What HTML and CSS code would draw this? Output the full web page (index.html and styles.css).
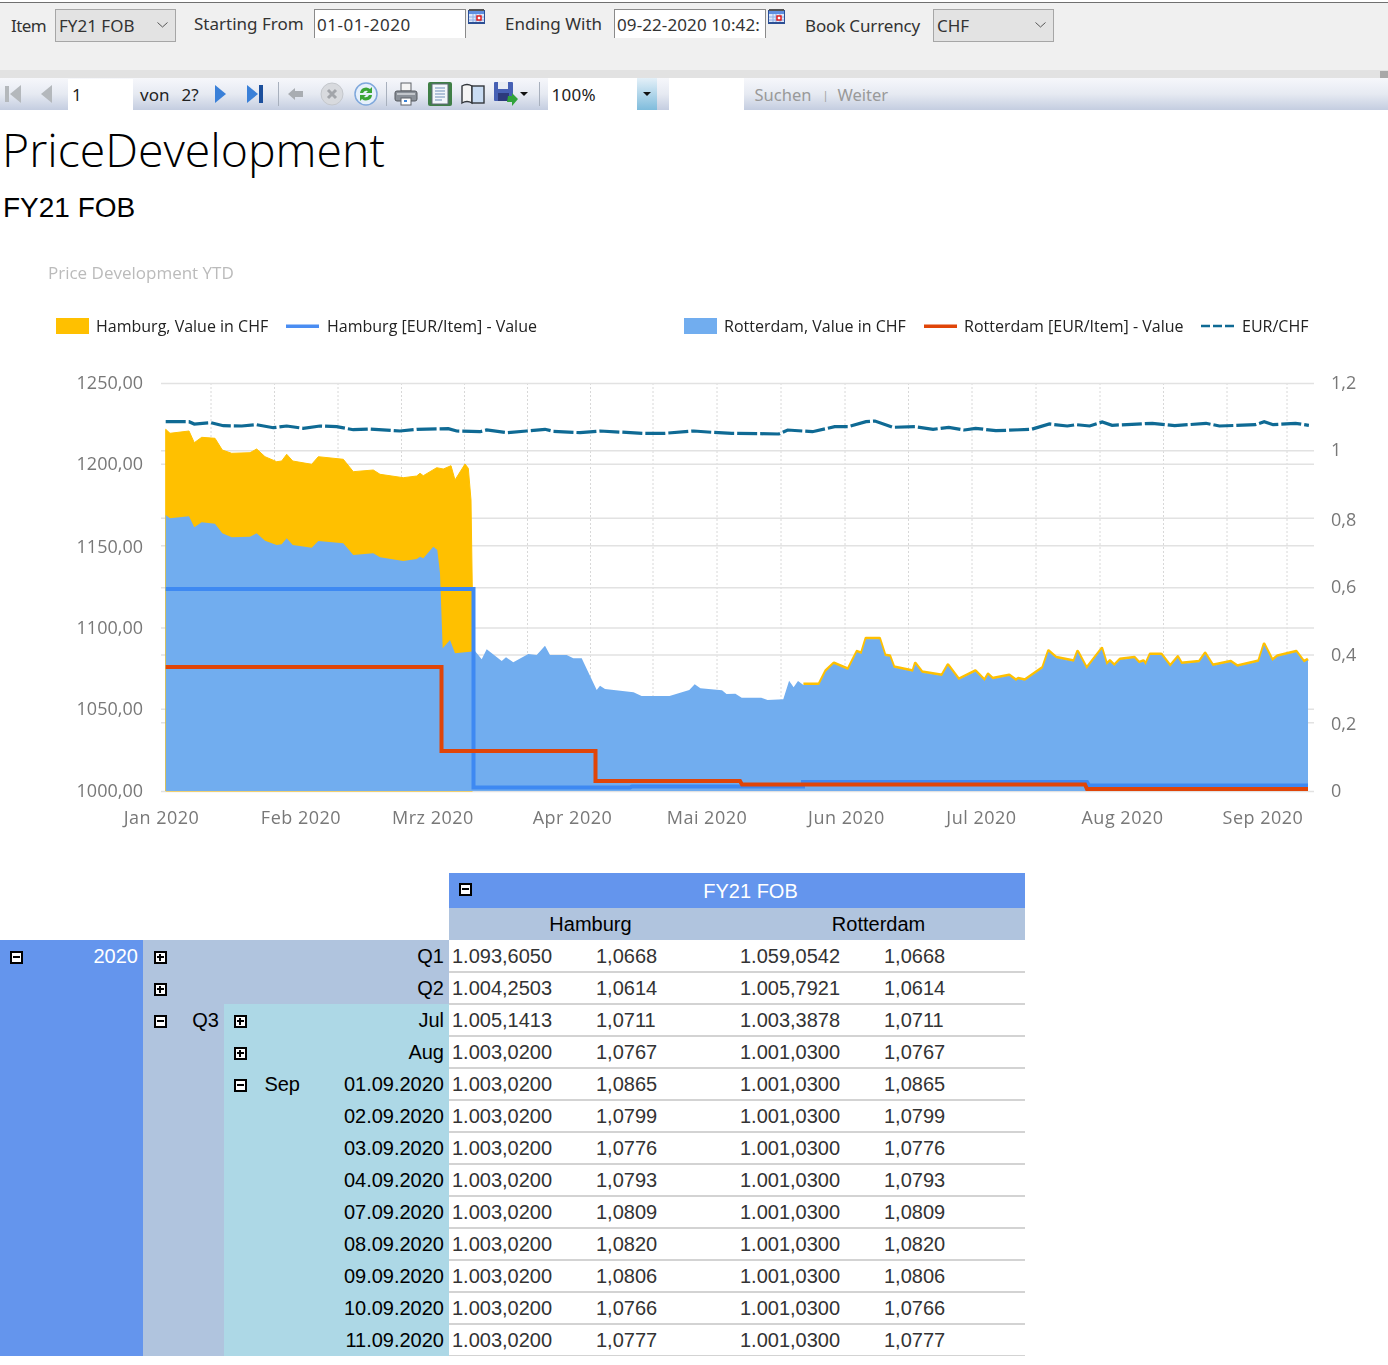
FILE: index.html
```html
<!DOCTYPE html>
<html lang="en">
  <head>
    <meta charset="UTF-8" />
    <title>PriceDevelopment</title>
    <link rel="stylesheet" href="styles.css">
  </head>
  <body>
    <div class="params">
      <div class="param-row">
        <label class="lbl lbl-item">Item</label>
        <div class="select sel-item">FY21 FOB
          <svg class="chev" width="11" height="6" viewBox="0 0 11 6"><path d="M0.5 0.5 L5.5 5 L10.5 0.5" fill="none" stroke="#555"/></svg>
        </div>
        <label class="lbl lbl-start">Starting From</label>
        <div class="date date-start">01-01-2020</div>
        <svg class="cal" width="17" height="16" viewBox="0 0 17 16">
          <rect x="0" y="1" width="17" height="14" fill="#2c4f94"/>
          <rect x="1" y="0" width="15" height="2" fill="#555"/>
          <rect x="1" y="2" width="15" height="3" fill="#5f8fe0"/>
          <rect x="1" y="5" width="15" height="8" fill="#dfe8f8"/>
          <path d="M1 8 H16 M1 11 H16 M5 5 V13 M8 5 V13 M12 5 V13" stroke="#8fb0e8"/>
          <rect x="9" y="7" width="4" height="4" fill="#fff" stroke="#e01010" stroke-width="1.4"/>
        </svg>
        <label class="lbl lbl-end">Ending With</label>
        <div class="date date-end">09-22-2020 10:42:</div>
        <svg class="cal" width="17" height="16" viewBox="0 0 17 16">
          <rect x="0" y="1" width="17" height="14" fill="#2c4f94"/>
          <rect x="1" y="0" width="15" height="2" fill="#555"/>
          <rect x="1" y="2" width="15" height="3" fill="#5f8fe0"/>
          <rect x="1" y="5" width="15" height="8" fill="#dfe8f8"/>
          <path d="M1 8 H16 M1 11 H16 M5 5 V13 M8 5 V13 M12 5 V13" stroke="#8fb0e8"/>
          <rect x="9" y="7" width="4" height="4" fill="#fff" stroke="#e01010" stroke-width="1.4"/>
        </svg>
        <label class="lbl lbl-cur">Book Currency</label>
        <div class="select sel-cur">CHF
          <svg class="chev" width="11" height="6" viewBox="0 0 11 6"><path d="M0.5 0.5 L5.5 5 L10.5 0.5" fill="none" stroke="#555"/></svg>
        </div>
      </div>
    </div>
    <div class="splitter"><span class="grip"></span></div>

    <div class="toolbar">
      <svg class="tb tb-first" width="17" height="18" viewBox="0 0 17 18"><rect x="0" y="1" width="4" height="16" fill="#b4b8bc"/><path d="M16 0 V18 L5 9 Z" fill="#b4b8bc"/></svg>
      <svg class="tb tb-prev" width="12" height="18" viewBox="0 0 12 18"><path d="M12 0 V18 L1 9 Z" fill="#b4b8bc"/></svg>
      <div class="page-box">1</div>
      <span class="tb-text tb-von">von</span>
      <span class="tb-text tb-total">2?</span>
      <svg class="tb tb-next" width="12" height="18" viewBox="0 0 12 18"><path d="M0 0 V18 L11 9 Z" fill="#3a80d8"/></svg>
      <svg class="tb tb-last" width="17" height="18" viewBox="0 0 17 18"><path d="M0 0 V18 L11 9 Z" fill="#3a80d8"/><rect x="12" y="0" width="4" height="18" fill="#1c4f9c"/></svg>
      <span class="sep sep-a"></span>
      <svg class="tb tb-back" width="16" height="12" viewBox="0 0 16 12"><path d="M0 6 L7 0 V3 H15 V9 H7 V12 Z" fill="#a9adb2"/></svg>
      <svg class="tb tb-stop" width="24" height="24" viewBox="0 0 24 24"><circle cx="12" cy="12" r="11" fill="#d8dade" stroke="#c4c7cc"/><path d="M8 8 L16 16 M16 8 L8 16" stroke="#a2a5aa" stroke-width="3"/></svg>
      <svg class="tb tb-refresh" width="24" height="24" viewBox="0 0 24 24"><circle cx="12" cy="12" r="11" fill="#e6f0fb" stroke="#7fa8dc" stroke-width="1.5"/><path d="M6 11 A6 6 0 0 1 16 7 L18 5 V11 H12 L14 9 A4 4 0 0 0 9 11 Z" fill="#3aa535"/><path d="M18 13 A6 6 0 0 1 8 17 L6 19 V13 H12 L10 15 A4 4 0 0 0 15 13 Z" fill="#3aa535"/></svg>
      <span class="sep sep-b"></span>
      <svg class="tb tb-print" width="24" height="24" viewBox="0 0 24 24"><rect x="7" y="1" width="10" height="8" fill="#f4f4f4" stroke="#5e6268"/><rect x="1" y="9" width="22" height="10" rx="2" fill="#8a9098" stroke="#55595f"/><rect x="3" y="11" width="18" height="2" fill="#c2c6cb"/><rect x="7" y="16" width="10" height="7" fill="#fff" stroke="#5e6268"/><rect x="10" y="18" width="3" height="2" fill="#3b82d6"/></svg>
      <svg class="tb tb-pagei" width="24" height="24" viewBox="0 0 24 24"><rect x="0" y="0" width="24" height="24" rx="2" fill="#3f7f46"/><rect x="4" y="2" width="16" height="20" fill="#f3f6fa" stroke="#5f6b76"/><path d="M7 6 H17 M7 9 H17 M7 12 H17 M7 15 H17 M7 18 H14" stroke="#6f8fb8"/></svg>
      <svg class="tb tb-book" width="24" height="22" viewBox="0 0 24 22"><path d="M1 20 V3 Q6 0 11 3 V20 Q6 17 1 20 Z" fill="#f5f5f5" stroke="#33373c" stroke-width="1.4"/><rect x="11" y="3" width="12" height="17" fill="#c9dcf3" stroke="#33373c" stroke-width="1.4"/></svg>
      <svg class="tb tb-save" width="24" height="24" viewBox="0 0 24 24"><rect x="0" y="0" width="19" height="19" rx="1" fill="#4660b4"/><rect x="4" y="0" width="10" height="7" fill="#e8ecf3"/><rect x="4" y="11" width="11" height="8" fill="#2c3a7c"/><path d="M14 14 L18 14 L18 11 L24 17 L18 24 L18 20 L13 20 Z" fill="#31a33a"/></svg>
      <svg class="tb tb-caret" width="8" height="4" viewBox="0 0 8 4"><path d="M0 0 H8 L4 4 Z" fill="#111"/></svg>
      <span class="sep sep-c"></span>
      <div class="zoom-box">100%</div>
      <div class="zoom-btn"><svg width="8" height="4" viewBox="0 0 8 4"><path d="M0 0 H8 L4 4 Z" fill="#111"/></svg></div>
      <div class="find-box"></div>
      <span class="find-link link-find">Suchen</span>
      <span class="find-bar">|</span>
      <span class="find-link">Weiter</span>
    </div>

    <div class="report-head">
      <h1>PriceDevelopment</h1>
      <h2>FY21 FOB</h2>
    </div>

    <svg class="chart" width="1388" height="633" viewBox="0 240 1388 633">
      <text class="chart-title" x="48" y="279">Price Development YTD</text>

      <rect x="56" y="318" width="33" height="16" fill="#ffc000"/>
      <text class="legend" x="96" y="332">Hamburg, Value in CHF</text>
      <rect x="286" y="324.5" width="33" height="3.5" fill="#4a8df2"/>
      <text class="legend" x="327" y="332">Hamburg [EUR/Item] - Value</text>
      <rect x="684" y="318" width="33" height="16" fill="#71adef"/>
      <text class="legend" x="724" y="332">Rotterdam, Value in CHF</text>
      <rect x="924" y="324.5" width="33" height="3.5" fill="#e04508"/>
      <text class="legend" x="964" y="332">Rotterdam [EUR/Item] - Value</text>
      <path d="M1201 326 H1234" stroke="#0f6a94" stroke-width="2.5" stroke-dasharray="9 3" fill="none"/>
      <text class="legend" x="1242" y="332">EUR/CHF</text>

      <path class="vgrid" d="M211 383 V791 M274.500 383 V791 M338 383 V791 M401.500 383 V791 M464.500 383 V791 M527.500 383 V791 M590.500 383 V791 M653 383 V791 M717 383 V791 M781 383 V791 M845 383 V791 M908.500 383 V791 M972 383 V791 M1036 383 V791 M1100 383 V791 M1163.500 383 V791 M1227 383 V791 M1287 383 V791"/>
      <path class="hgrid" d="M161 383.500 H1314 M161 450.700 H1314 M161 464.300 H1314 M161 518.300 H1314 M161 545.700 H1314 M161 587.700 H1314 M161 628 H1314 M161 655 H1314 M161 709.300 H1314 M161 722.700 H1314 M161 791.500 H1314"/>

      <path fill="#ffc000" stroke="#ffc000" stroke-linejoin="round" d="M165.700 791 V429.300 L170 433.300 L189 431 L194.300 442.700 L201.700 437.300 L215 438.300 L222.300 450 L231.700 453.300 L250 452.700 L256.700 449 L265 456.700 L276.700 461.700 L281.700 461 L286.700 454.300 L292.700 461 L311.700 464.300 L318.300 456.700 L343.300 459.300 L353.300 471.700 L373.300 470 L380 474.300 L403.300 477.700 L416.700 476 L420 473.300 L423.300 475.700 L436.700 467.700 L443.300 469 L451 465.700 L455 480 L465 464 L468.300 468.300 L471 500 L472.300 588 L472.500 652 V791 Z"/>
      <polyline fill="none" stroke="#ffc000" stroke-width="3" stroke-linejoin="round" points="803.400,684 819.100,684 825.800,670.700 833.800,663 848.100,669 857,651.300 861.500,653 866,638.300 879.500,638.300 884.900,655 889.700,655.700 893.800,666.700 913,670.700 915.300,663.300 921.900,671.700 942,675 947.900,664.700 958.600,679 975.500,670.700 984.600,680 988.100,674 992.600,678.300 1009.200,675 1016,680 1018.100,678.300 1024.900,679.700 1042.800,667.300 1048.500,650.700 1056.200,657.300 1074,660.700 1077.600,651.300 1086.600,668 1101.800,648.300 1106.600,664 1109.800,660.700 1114.300,665 1120.100,659 1134.400,657.300 1138.900,662.300 1143.400,660.700 1145.600,664 1150.100,654 1161.200,654 1170.200,665.700 1177.800,656.700 1181.400,663 1199.300,661.300 1205.100,653 1212.700,665 1230.700,661.300 1237.300,665.700 1258.800,660.700 1264.100,644 1272.300,660 1277.600,655.700 1296.300,651.300 1304,661.600 1308,659"/>
      <path fill="#71adef" d="M165.700 791 V515 L170 518.300 L189 516.300 L194.300 527.300 L201.700 522.300 L215 523.700 L222.300 533.300 L231.700 537.300 L250 536.700 L256.700 533.300 L265 540.700 L276.700 545 L281.700 544.300 L286.700 538.300 L292.700 545 L311.700 547.700 L318.300 541 L343.300 543.300 L353.300 555 L373.300 553.300 L380 557.300 L403.300 561 L416.700 559 L420 556.700 L423.300 558.300 L433.300 546.700 L437.300 550 L440 573.300 L442.700 648.300 L450 640 L455 653.300 L470 651.700 L475 651 L481.700 659.300 L486.700 649.300 L501.700 661 L506 657.300 L513.300 662.300 L528.300 654 L536.700 655 L545 645.700 L550 655 L566.700 655 L573.300 658.300 L581.700 658.300 L596.700 690 L600 685.700 L605 689 L633.500 692.300 L641.600 696 L669.500 696 L689.300 690 L694.700 684.300 L700.400 688.300 L722 690.300 L726.500 694 L735.400 693.700 L741.700 697.700 L761.300 697.700 L767.600 700 L783.300 699.300 L789.100 680.700 L793.600 687.300 L798 681 L803.400 685 L819.100 685 L825.800 671.700 L833.800 664 L848.100 670 L857 652.300 L861.500 654 L866 639.300 L879.500 639.300 L884.900 656 L889.700 656.700 L893.800 667.700 L913 671.700 L915.300 664.300 L921.900 672.700 L942 676 L947.900 665.700 L958.600 680 L975.500 671.700 L984.600 681 L988.100 675 L992.600 679.300 L1009.200 676 L1016 681 L1018.100 679.300 L1024.900 680.700 L1042.800 668.300 L1048.500 651.700 L1056.200 658.300 L1074 661.700 L1077.600 652.300 L1086.600 669 L1101.800 649.300 L1106.600 665 L1109.800 661.700 L1114.300 666 L1120.100 660 L1134.400 658.300 L1138.900 663.300 L1143.400 661.700 L1145.600 665 L1150.100 655 L1161.200 655 L1170.200 666.700 L1177.800 657.700 L1181.400 664 L1199.300 662.300 L1205.100 654 L1212.700 666 L1230.700 662.300 L1237.300 666.700 L1258.800 661.700 L1264.100 645 L1272.300 661 L1277.600 656.700 L1296.300 652.300 L1304 662.600 L1308 660 V791 Z"/>

      <polyline class="line-blue" points="165.700,589 473.500,589 473.500,787.500 630,787.500 632,786.500 803,786.500 803,782 1087,782 1089,785.500 1308,785.500"/>
      <polyline class="line-red" points="165.700,667 441.500,667 441.500,751 595.500,751 595.500,781 740,781 742,784.500 1085,784.500 1087,789 1308,789"/>
      <polyline class="line-fx" points="165.700,421.700 189,421.700 194.300,424 211,422.700 223.300,425.700 241.700,426 256.700,424.700 273.300,427.700 286.700,426 303.300,428.300 320,426 336.700,426.700 353.300,429.700 370,429 400,431 416.700,429.300 448.300,428.700 456.700,431 480,431.700 486.700,430 506.700,432.700 526.700,431 545,429.300 553.300,431.300 580,432.700 600,431 642.400,433.300 664.700,433.300 693.800,431 711.700,432.300 731.800,433.300 778.800,434 787.700,430 812.400,431.700 834.700,426.700 848,426.700 866,421.700 875,421 892.900,427.300 915.200,426.700 933.100,429.300 948.800,427.300 964.400,430 975.600,428.300 995.800,430.700 1031.500,429.300 1049.400,424 1067.300,426 1076.300,424.700 1089.700,426 1102.200,422 1112.100,425.300 1152.300,423.300 1174.700,425.700 1206,423.300 1219.400,426 1255.200,424.700 1264.200,421.700 1273.100,424.700 1295.500,423.300 1308.900,425.300"/>

      <text class="axis axis-end" x="143" y="389">1250,00</text>
      <text class="axis axis-end" x="143" y="470">1200,00</text>
      <text class="axis axis-end" x="143" y="553">1150,00</text>
      <text class="axis axis-end" x="143" y="634">1100,00</text>
      <text class="axis axis-end" x="143" y="715">1050,00</text>
      <text class="axis axis-end" x="143" y="797">1000,00</text>

      <text class="axis" x="1331" y="389">1,2</text>
      <text class="axis" x="1331" y="456">1</text>
      <text class="axis" x="1331" y="526">0,8</text>
      <text class="axis" x="1331" y="593">0,6</text>
      <text class="axis" x="1331" y="661">0,4</text>
      <text class="axis" x="1331" y="730">0,2</text>
      <text class="axis" x="1331" y="797">0</text>

      <text class="axis axis-mid month-tick" x="161.500" y="824">Jan 2020</text>
      <text class="axis axis-mid month-tick" x="301" y="824">Feb 2020</text>
      <text class="axis axis-mid month-tick" x="433" y="824">Mrz 2020</text>
      <text class="axis axis-mid month-tick" x="572.500" y="824">Apr 2020</text>
      <text class="axis axis-mid month-tick" x="707" y="824">Mai 2020</text>
      <text class="axis axis-mid month-tick" x="846.500" y="824">Jun 2020</text>
      <text class="axis axis-mid month-tick" x="981.500" y="824">Jul 2020</text>
      <text class="axis axis-mid month-tick" x="1122.500" y="824">Aug 2020</text>
      <text class="axis axis-mid month-tick" x="1263" y="824">Sep 2020</text>
    </svg>

    <table class="pivot">
      <colgroup>
        <col class="c-year" /><col class="c-quarter" /><col class="c-month" /><col class="c-day" />
        <col class="c-val" /><col class="c-val" /><col class="c-val" /><col class="c-val" />
      </colgroup>
      <tr class="head-top">
        <td colspan="4" rowspan="2" class="blank"></td>
        <td colspan="4" class="fy"><span class="toggle minus"></span>FY21 FOB</td>
      </tr>
      <tr class="head-sub">
        <td colspan="2" class="place">Hamburg</td>
        <td colspan="2" class="place">Rotterdam</td>
      </tr>
      <tr class="first">
        <td rowspan="13" class="year"><div class="hd"><span class="toggle minus"></span>2020</div></td>
        <td colspan="3" class="quarter"><div class="hd hd-q"><span class="toggle plus"></span>Q1</div></td>
        <td>1.093,6050</td><td>1,0668</td><td>1.059,0542</td><td>1,0668</td>
      </tr>
      <tr>
        <td colspan="3" class="quarter"><div class="hd hd-q"><span class="toggle plus"></span>Q2</div></td>
        <td>1.004,2503</td><td>1,0614</td><td>1.005,7921</td><td>1,0614</td>
      </tr>
      <tr>
        <td rowspan="11" class="quarter"><div class="hd hd-q"><span class="toggle minus"></span>Q3</div></td>
        <td colspan="2" class="month"><div class="hd"><span class="toggle plus"></span>Jul</div></td>
        <td>1.005,1413</td><td>1,0711</td><td>1.003,3878</td><td>1,0711</td>
      </tr>
      <tr>
        <td colspan="2" class="month"><div class="hd"><span class="toggle plus"></span>Aug</div></td>
        <td>1.003,0200</td><td>1,0767</td><td>1.001,0300</td><td>1,0767</td>
      </tr>
      <tr>
        <td rowspan="9" class="month"><div class="hd"><span class="toggle minus"></span>Sep</div></td>
        <td class="month day">01.09.2020</td>
        <td>1.003,0200</td><td>1,0865</td><td>1.001,0300</td><td>1,0865</td>
      </tr>
      <tr><td class="month day">02.09.2020</td><td>1.003,0200</td><td>1,0799</td><td>1.001,0300</td><td>1,0799</td></tr>
      <tr><td class="month day">03.09.2020</td><td>1.003,0200</td><td>1,0776</td><td>1.001,0300</td><td>1,0776</td></tr>
      <tr><td class="month day">04.09.2020</td><td>1.003,0200</td><td>1,0793</td><td>1.001,0300</td><td>1,0793</td></tr>
      <tr><td class="month day">07.09.2020</td><td>1.003,0200</td><td>1,0809</td><td>1.001,0300</td><td>1,0809</td></tr>
      <tr><td class="month day">08.09.2020</td><td>1.003,0200</td><td>1,0820</td><td>1.001,0300</td><td>1,0820</td></tr>
      <tr><td class="month day">09.09.2020</td><td>1.003,0200</td><td>1,0806</td><td>1.001,0300</td><td>1,0806</td></tr>
      <tr><td class="month day">10.09.2020</td><td>1.003,0200</td><td>1,0766</td><td>1.001,0300</td><td>1,0766</td></tr>
      <tr><td class="month day">11.09.2020</td><td>1.003,0200</td><td>1,0777</td><td>1.001,0300</td><td>1,0777</td></tr>
    </table>
  </body>
</html>
```

FILE: styles.css
```css
html, body {
  margin: 0;
  padding: 0;
  background-color: #fff;
}

body {
  font-family: "Noto Sans", Tahoma, sans-serif;
  height: 1365px;
  overflow: hidden;
}

/* parameter area */
.params {
  height: 67px;
  margin-top: 2px;
  border-top: 1px solid #707070;
  background-color: #f0f0f0;
}

.param-row {
  display: flex;
  align-items: flex-start;
  padding-top: 6px;
  font-size: 17px;
  color: #333;
}

.lbl {
  line-height: 30px;
}

.lbl-item { margin-left: 11px; margin-top: 2px; width: 44px; letter-spacing: -0.6px; }
.lbl-start { margin-left: 18px; width: 120px; }
.lbl-end { margin-left: 20px; width: 109px; }
.lbl-cur { margin-left: 20px; margin-top: 2px; width: 128px; letter-spacing: -0.15px; }

.select {
  position: relative;
  box-sizing: border-box;
  height: 33px;
  line-height: 31px;
  padding-left: 3px;
  border: 1px solid #a6a6a6;
  background-color: #e3e3e3;
}

.sel-item { width: 121px; }
.sel-cur { width: 121px; }

.chev {
  position: absolute;
  right: 7px;
  top: 12px;
}

.date {
  box-sizing: border-box;
  height: 29px;
  width: 152px;
  line-height: 30px;
  padding-left: 2px;
  border: 1px solid #8a8a8a;
  border-bottom: none;
  background-color: #fff;
  white-space: nowrap;
  overflow: hidden;
}

.date-start { letter-spacing: 0.5px; }
.date-end { letter-spacing: 0.1px; }

.cal {
  margin-left: 2px;
}

.splitter {
  position: relative;
  height: 8px;
  background-color: #e2e2e2;
}

.grip {
  position: absolute;
  right: 0;
  top: 1px;
  width: 8px;
  height: 7px;
  background-color: #a8a8a8;
}

/* report toolbar */
.toolbar {
  display: flex;
  align-items: center;
  height: 32px;
  font-size: 17px;
  color: #222;
  background: linear-gradient(#f6f7fb, #e6eaf2 50%, #c4cde0);
}

.tb { flex: none; }
.tb-first { margin-left: 5px; }
.tb-prev { margin-left: 18px; }
.tb-next { margin-left: 16px; }
.tb-last { margin-left: 20px; }
.tb-back { margin-left: 9px; }
.tb-stop { margin-left: 16px; }
.tb-refresh { margin-left: 10px; }
.tb-print { margin-left: 7px; }
.tb-pagei { margin-left: 10px; }
.tb-book { margin-left: 9px; }
.tb-save { margin-left: 9px; }
.tb-caret { margin-left: 2px; }

.page-box {
  align-self: stretch;
  width: 61px;
  margin: 1px 0 0 16px;
  padding-left: 4px;
  line-height: 31px;
  background-color: #fff;
}

.tb-von { margin-left: 7px; }
.tb-total { margin-left: 12px; }

.sep {
  flex: none;
  width: 1px;
  height: 24px;
  background-color: #a8b0bd;
}

.sep-a { margin-left: 14px; }
.sep-b { margin-left: 8px; }
.sep-c { margin-left: 11px; }

.zoom-box {
  align-self: stretch;
  width: 85px;
  margin-left: 8px;
  padding-left: 4px;
  line-height: 34px;
  letter-spacing: 0.3px;
  background-color: #fff;
}

.zoom-btn {
  display: flex;
  align-items: center;
  justify-content: center;
  align-self: stretch;
  width: 20px;
  background: linear-gradient(#e4f0f8, #7fbcdc);
}

.find-box {
  align-self: stretch;
  width: 75px;
  margin-left: 12px;
  background-color: #fff;
}

.find-link {
  font-size: 16.5px;
  color: #999;
}

.link-find { margin-left: 11px; }

.find-bar {
  margin: 0 9px 0 11px;
  font-size: 11px;
  color: #a0a0a0;
}

/* report heading */
.report-head {
  height: 130px;
  padding-left: 2px;
  box-sizing: border-box;
}

.report-head h1 {
  margin: 0;
  height: 81px;
  font-family: "Open Sans", sans-serif;
  font-weight: 300;
  font-size: 46.4px;
  line-height: 78px;
  color: #000;
}

.report-head h2 {
  margin: 0;
  padding-left: 1px;
  font-family: "Liberation Sans", Arial, sans-serif;
  font-weight: 400;
  font-size: 28px;
  line-height: 34px;
  color: #000;
}

/* chart */
.chart {
  display: block;
  filter: blur(0.4px);
}

.chart text {
  font-family: "Open Sans", sans-serif;
}

.chart-title {
  font-size: 17px;
  fill: #bbb;
}

.legend {
  font-size: 16px;
  fill: #222;
}

.axis {
  font-size: 18px;
  fill: #787878;
}

.axis-end { text-anchor: end; }
.axis-mid { text-anchor: middle; }
.month-tick { letter-spacing: 0.5px; }

.hgrid {
  stroke: #e2e2e2;
  stroke-width: 1.5;
  fill: none;
}

.vgrid {
  stroke: #d8d8d8;
  stroke-width: 1;
  stroke-dasharray: 2 2;
  fill: none;
}

.line-blue, .line-red {
  fill: none;
  stroke-width: 4;
}

.line-blue { stroke: #3e89f2; }
.line-red { stroke: #e04508; }

.line-fx {
  fill: none;
  stroke: #0f6a94;
  stroke-width: 3.2;
  stroke-dasharray: 20 3;
}

/* pivot table */
.pivot {
  table-layout: fixed;
  width: 1025px;
  border-collapse: separate;
  border-spacing: 0;
  font-family: "Liberation Sans", Arial, sans-serif;
  font-size: 20px;
  color: #333;
}

.c-year { width: 143px; }
.c-quarter { width: 81px; }
.c-month { width: 81px; }
.c-day { width: 144px; }
.c-val { width: 144px; }

.pivot td {
  box-sizing: border-box;
  height: 32px;
  padding: 1px 0 0 3px;
  line-height: 28px;
  vertical-align: top;
  white-space: nowrap;
  border-top: 1px solid #d3d3d3;
  border-bottom: 1px solid #d3d3d3;
}

.pivot .first td {
  border-top-color: #fff;
}

.pivot .blank, .pivot .place, .pivot .fy,
.pivot .year, .pivot .quarter, .pivot .first .year, .pivot .first .quarter, .pivot .month {
  padding: 0;
  line-height: 32px;
  border: none;
  color: #000;
}

.pivot .blank {
  background-color: #fff;
}

.pivot .head-top td {
  height: 35px;
}

.pivot .fy {
  position: relative;
  padding: 1px 0 0 27px;
  line-height: 34px;
  text-align: center;
  background-color: #6495ed;
  color: #fff;
}

.fy .toggle {
  position: absolute;
  left: 10px;
  top: 10px;
  margin-top: 0;
}

.pivot .place {
  padding: 1px 5px 0 0;
  line-height: 31px;
  text-align: center;
  background-color: #b0c4de;
}

.pivot .year,
.pivot .first .year {
  background-color: #6495ed;
  color: #fff;
}

.pivot .quarter {
  background-color: #b0c4de;
}

.pivot .month {
  background-color: #add8e6;
}

.pivot .day {
  padding-right: 5px;
  text-align: right;
}

.hd {
  display: flex;
  align-items: center;
  justify-content: space-between;
  height: 32px;
  padding: 0 5px 0 10px;
}

.hd-q {
  padding-left: 11px;
}

.toggle {
  position: relative;
  display: block;
  flex: none;
  box-sizing: border-box;
  width: 13px;
  height: 13px;
  margin-top: 3px;
  border: 2px solid #000;
  background-color: #fff;
}

.toggle::before {
  content: "";
  position: absolute;
  left: 1px;
  top: 3px;
  width: 7px;
  height: 2px;
  background-color: #000;
}

.plus::after {
  content: "";
  position: absolute;
  left: 3px;
  top: 1px;
  width: 2px;
  height: 7px;
  background-color: #000;
}
```
